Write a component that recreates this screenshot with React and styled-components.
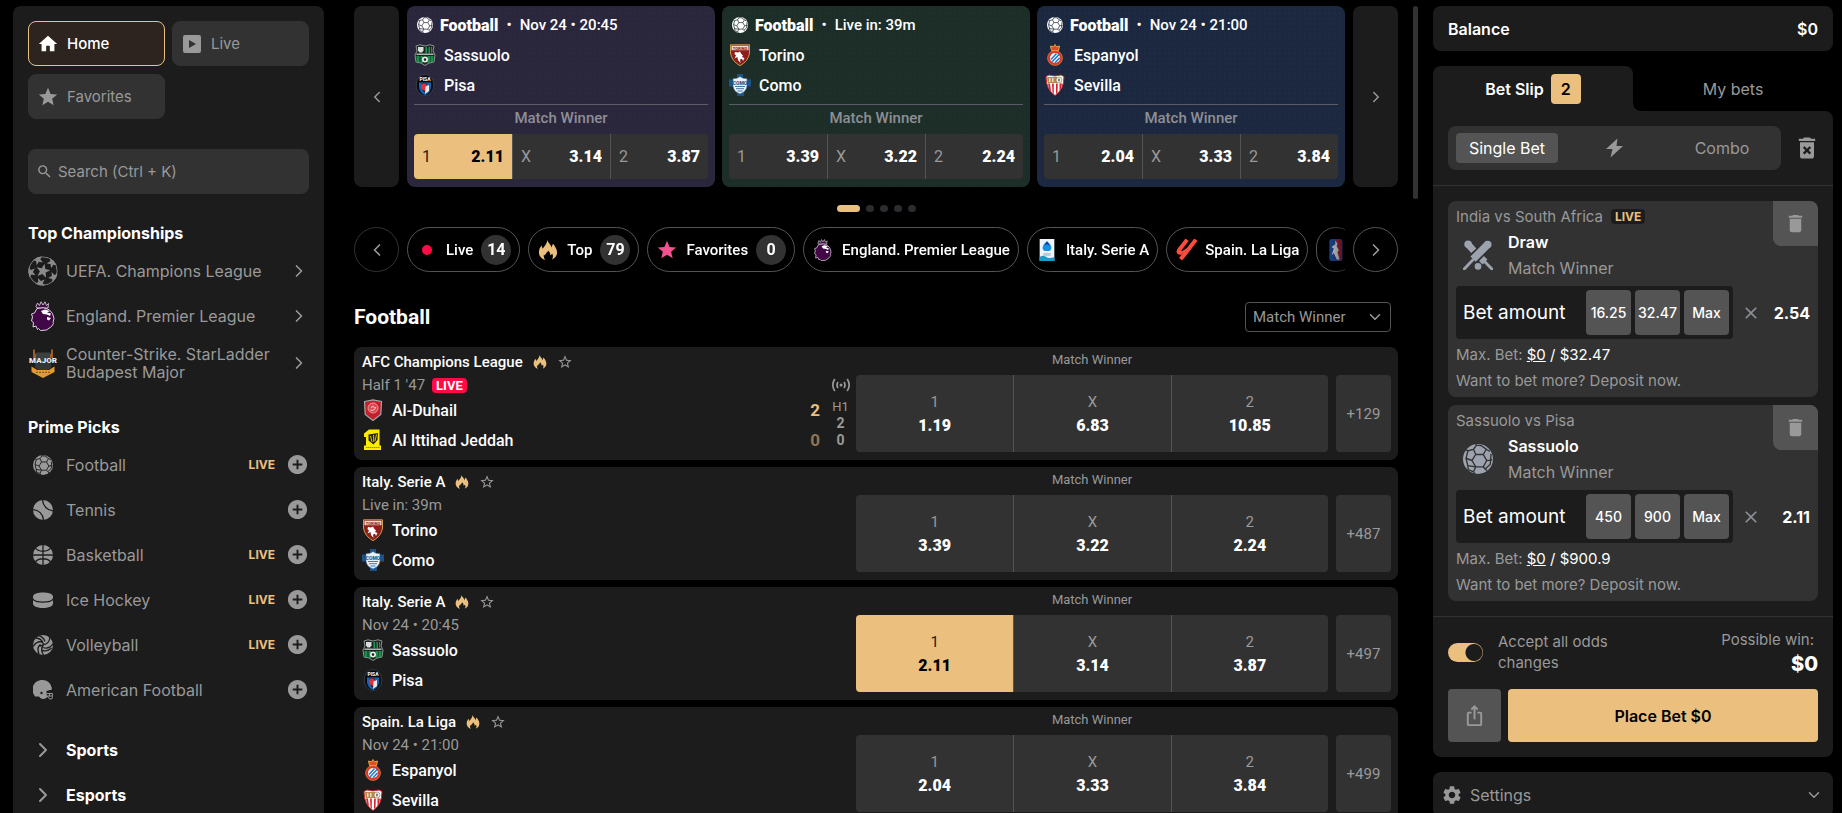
import React, { useState } from "react";
import styled, { createGlobalStyle } from "styled-components";
import {
  MdAddCircle,
  MdClose,
  MdDelete,
  MdDeleteForever,
  MdHome,
  MdIosShare,
  MdSearch,
  MdSettings,
  MdStar,
  MdStarBorder,
} from "react-icons/md";
import { LuChevronDown, LuChevronLeft, LuChevronRight } from "react-icons/lu";

const championships = [
  { name: "UEFA. Champions League", logo: "ucl" },
  { name: "England. Premier League", logo: "epl" },
  { name: "Counter-Strike. StarLadder Budapest Major", logo: "major" },
];

const picks = [
  { name: "Football", icon: "football", live: true },
  { name: "Tennis", icon: "tennis" },
  { name: "Basketball", icon: "basketball", live: true },
  { name: "Ice Hockey", icon: "puck", live: true },
  { name: "Volleyball", icon: "volleyball", live: true },
  { name: "American Football", icon: "helmet" },
];

const featured = [
  { time: "Nov 24 • 20:45", teams: ["Sassuolo", "Pisa"], odds: ["2.11", "3.14", "3.87"], picked: 0, color: "#2a263c", dot: "#2e2940" },
  { time: "Live in: 39m", teams: ["Torino", "Como"], odds: ["3.39", "3.22", "2.24"], color: "#1d2e28", dot: "#1e312a" },
  { time: "Nov 24 • 21:00", teams: ["Espanyol", "Sevilla"], odds: ["2.04", "3.33", "3.84"], color: "#1b283f", dot: "#1f2d44" },
];

const matches = [
  {
    league: "AFC Champions League",
    time: "Half 1 '47",
    teams: ["Al-Duhail", "Al Ittihad Jeddah"],
    odds: ["1.19", "6.83", "10.85"],
    more: 129,
    score: [2, 0],
  },
  { league: "Italy. Serie A", time: "Live in: 39m", teams: ["Torino", "Como"], odds: ["3.39", "3.22", "2.24"], more: 487 },
  { league: "Italy. Serie A", time: "Nov 24 • 20:45", teams: ["Sassuolo", "Pisa"], odds: ["2.11", "3.14", "3.87"], more: 497, picked: 0 },
  { league: "Spain. La Liga", time: "Nov 24 • 21:00", teams: ["Espanyol", "Sevilla"], odds: ["2.04", "3.33", "3.84"], more: 499 },
];

const bets = [
  { match: "India vs South Africa", live: true, pick: "Draw", icon: "cricket", amounts: ["16.25", "32.47", "Max"], odd: "2.54", max: "$32.47" },
  { match: "Sassuolo vs Pisa", pick: "Sassuolo", icon: "football", amounts: ["450", "900", "Max"], odd: "2.11", max: "$900.9" },
];

const outcomes = ["1", "X", "2"];

// five-pointed star as a list of polygon points
function star(cx, cy, r, turn, inner = 0.42) {
  return Array.from({ length: 10 }, (_, i) => {
    const a = ((turn + i * 36) * Math.PI) / 180;
    const d = i % 2 ? r * inner : r;
    return `${(cx + d * Math.sin(a)).toFixed(2)},${(cy - d * Math.cos(a)).toFixed(2)}`;
  }).join(" ");
}

function SportIcon({ name, size = 20, line = "#1c1c1c", color = "currentColor" }) {
  const stroke = { fill: "none", stroke: line, strokeWidth: 1.3 };
  return (
    <svg width={size} height={size} viewBox="0 0 20 20" fill={color} aria-hidden="true">
      {name === "football" && (
        <>
          <circle cx="10" cy="10" r="10" />
          <g {...stroke} strokeWidth={0.9}>
            <path d="M8.500 7h5l2.300 4-2.300 4.200h-5L6 11z" />
            <path d="M8.500 7 7 3.500 3.300 4.500 2 9.500 6 11M7 3.500 9 .8 12 1 15.500 3.500 13.500 7M15.500 3.500 18 5M15.800 11 19.500 10.500M13.500 15.200 16 18M8.500 15.200 7 18.500 3.500 17 3.200 14M8.500 15.200 3.200 14.500 2 9.500M18.700 6.500 18.200 13.500 15 16.500M9 .8 8.500 0M3.300 4.500 2 4M7 18.500 8 20" />
          </g>
        </>
      )}
      {name === "tennis" && (
        <>
          <circle cx="10" cy="10" r="10" />
          <path d="M9.500-1C9.500 6 14.500 10.800 21 10.800M-1 9.500C5.500 9.500 10.500 14 10.500 21" {...stroke} />
        </>
      )}
      {name === "basketball" && (
        <>
          <circle cx="10" cy="10" r="10" />
          <path d="M10 0v20M0 10h20M2 2.500C5 7.500 15 7.500 18 2.500M2 17.500C5 12.500 15 12.500 18 17.500" {...stroke} />
        </>
      )}
      {name === "puck" && (
        <>
          <path d="M0 6.500C0 1 20 1 20 6.500v7C20 19.500 0 19.500 0 13.500z" />
          <path d="M-.5 8.500C2 13.200 18 13.200 20.500 8.500" {...stroke} />
        </>
      )}
      {name === "volleyball" && (
        <>
          <circle cx="10" cy="10" r="10" />
          <path
            d="M10.500 9.500C9.500 5.500 6.500 3 2.500 3M12 6.500C11 3.500 8.500 1.200 5.500.5M10.500 9.500C14 9.500 17 6.500 16.800 2M10.500 9.500 6.500 11.500M9 7C5 6 2 8.500.3 11.500M7.500 9.500C5 11 4.500 15 6 19M10.500 9.500C8 13 8.500 17 10.500 20M10 12.500c4 1.500 7.500 0 10-3.500M9.500 15.500c3.500.8 6.500 0 9-2.500"
            {...stroke}
          />
        </>
      )}
      {name === "helmet" && (
        <>
          <path d="M9.500 0C15 0 18.500 4 19 9.500l-5.500 1.500.5 6.500-3 1.500c-2.500.3-4-.8-5-2.500H2C0 14-.8 11-.5 8.500 0 3.500 4 0 9.500 0z" />
          <circle cx="8.500" cy="13" r="1.200" fill={line} />
          <path d="M14 13.500h5.500c.3 2.200 0 4-.8 5.500h-2L14 16h5.300M16.500 13.500v3" fill="none" stroke={color} strokeWidth="1" />
        </>
      )}
      {name === "cricket" && (
        <g fill="none" stroke={color}>
          <path d="M3 2.500 7.200 7.200M12.300 12.300l2.400 2.400" strokeWidth="4.600" />
          <path d="M3.400 2.900 3.400 2.900" strokeWidth="5" strokeLinecap="round" />
          <path d="m14.500 14.500 4.800 4.800" strokeWidth="1.900" strokeLinecap="round" />
          <path d="M18.500 1 5.800 13.800" stroke={line} strokeWidth="6.800" />
          <path d="m16.700 2.800-10 10" strokeWidth="5" />
          <path d="m16.500 3 0 0" strokeWidth="5" strokeLinecap="round" />
          <path d="m6.500 13.300-5.700 6" strokeWidth="1.900" strokeLinecap="round" />
          <circle cx="10" cy="17.600" r="2.200" fill={color} stroke="none" />
        </g>
      )}
    </svg>
  );
}

function Crest({ team, size = 22 }) {
  return (
    <svg width={size} height={size} viewBox="0 0 22 22" aria-hidden="true">
      {team === "Sassuolo" && (
        <>
          <path d="M2 2 6 .8 11 2l5-1.200L20 2l-1 5 2 4-1 7-5 1-4 2.500L7 19l-5-1-1-7 2-4z" fill="#1d2420" stroke="#8c9691" />
          <path d="M11.500 3h1.500v6h-1.500zM14.500 3H16v6h-1.500zM17 3h1v5.500h-1z" fill="#1c9a55" />
          <path d="M4 3h5.500v3.500L8 8.500H5.500L4 6.500z" fill="#d9dedb" />
          <path d="M2.500 9.500h17V11h-17z" fill="#aab5ae" />
          <path d="M2.500 12h3v6h-3zM16.500 12h3v6h-3zM6.500 12H9v7H6.500zM13.500 12H16v7h-2.500z" fill="#17904c" />
          <circle cx="11" cy="15.500" r="3" fill="#e8ece9" />
          <path d="m11 14 1.400 1-.5 1.700h-1.800l-.5-1.700z" fill="#1b211e" />
        </>
      )}
      {team === "Pisa" && (
        <>
          <ellipse cx="11" cy="11" rx="8.800" ry="10.500" fill="#090b10" stroke="#3c4652" strokeWidth=".8" />
          <path d="M5 8.500h12V13q0 5-6 8-6-3-6-8z" fill="#1564b4" />
          <path d="M7.500 9.500h5v10L9 17z" fill="#0b0f17" />
          <path d="M7 12q0-3 4-2.500l2 2-2 5.500q-4-1-4-5z" fill="#e32f3b" />
          <path d="M11.500 12.500 15 11v6l-4 3z" fill="#e6e8ea" />
          <text x="11" y="7" fontSize="5" fontWeight="700" fill="#fff" textAnchor="middle" fontFamily="Roboto, sans-serif">PISA</text>
        </>
      )}
      {team === "Torino" && (
        <>
          <path d="M1.500.8h19V9q-1 8-9.500 12.700Q2.500 17 1.500 9z" fill="#8a1f1c" stroke="#d39a45" />
          <path d="M2.500 1.800h17v4.400h-17z" fill="#f0dfd2" />
          <text x="11" y="5.500" fontSize="4" fontWeight="900" fill="#a22520" textAnchor="middle" fontFamily="Roboto, sans-serif">TORINO</text>
          <path d="m6 8 3 .5 2-1 1 2 2 2-1 1.500 2.500 1L14 17l-1-2.200-2 .7.500 3.500L9 16l-.5-3-3 1.500L7 11.500 5.500 10z" fill="#fff" />
        </>
      )}
      {team === "Como" && (
        <>
          <path d="M8 0h6v5.500h8v7h-7V22H8v-9.500H0v-7h8z" fill="#1d5286" />
          <path d="M4 4.500Q8 5 11 2.500 14 5 18 4.500V12q0 5-7 8-7-3-7-8z" fill="#e9f1f7" stroke="#2b5d8e" strokeWidth=".6" />
          <text x="11" y="10.500" fontSize="5" fontWeight="900" fill="#225b91" textAnchor="middle" fontFamily="Roboto, sans-serif">COMO</text>
          <path d="M6 12.500h10M7 14.700h8M8.500 17h5" stroke="#3f78ab" />
        </>
      )}
      {team === "Espanyol" && (
        <>
          <path d="m6.500 2 3 .8L11 .5l1.500 2.300 3-.8-1 4.500h-7z" fill="#e4482d" stroke="#eeb42c" strokeWidth=".9" />
          <circle cx="11" cy="14" r="7.500" fill="#e2352c" stroke="#f3a72e" strokeWidth=".5" />
          <circle cx="11" cy="14" r="5" fill="#fff" />
          <path d="m7 15.500 5.500-6M8 18l7.300-7.800M11 18.800l4.700-5" stroke="#2a78c2" strokeWidth="1.600" />
        </>
      )}
      {team === "Sevilla" && (
        <>
          <path d="M2 2.500 5 1l6 1 6-1 3 1.500q0 13-9 19-9-6-9-19z" fill="#fff" stroke="#cc2a2d" />
          <path d="M4 9.500h2l1 8-2-3zM8 9.500h1.800V20L8.500 18.500zM12 9.500h1.800l-.3 9-1.500 1.500zM15.500 9.500H18l-1 5-1.500 2z" fill="#d7212c" />
          <path d="M3 3h10v6H3.500z" fill="#b98949" />
          <path d="M5 4h1.500v4H5zM8 4h1.500v4H8z" fill="#e9dcc0" />
          <circle cx="15" cy="6" r="3" fill="#f4f0e6" stroke="#6f5a35" strokeWidth=".5" />
          <path d="M15 4.500v3M14 6h2" stroke="#333" strokeWidth=".7" />
        </>
      )}
      {team === "Al-Duhail" && (
        <>
          <path d="M2.500 2.500 11 .8l8.500 1.700-.7 13L11 21.500l-7.800-6z" fill="#c2202a" stroke="#a3a6aa" strokeWidth="1.200" />
          <circle cx="11" cy="9" r="5" fill="#e04850" stroke="#f2bcbc" strokeWidth=".7" />
          <path d="M8.500 11q4 1.500 5-3M9 8.500q2-2 3.500 0" fill="none" stroke="#fff" strokeWidth=".8" />
        </>
      )}
      {team === "Al Ittihad Jeddah" && (
        <>
          <path d="M7 .5h10.500v16h1.500V21H2v-4.500h2V8H2V4.500z" fill="#fdec00" />
          <path d="M6.500 5.500 16 4l-.5 7-4 4.500-5-4z" fill="#2a2609" />
          <path d="m8.500 7 1.500 6M11.500 6l.3 7M14.500 5.500 13 12" stroke="#fdec00" strokeWidth=".8" />
          <path d="M4 18.500h13.500" stroke="#7b7400" strokeWidth=".8" strokeDasharray="1.500 .5" />
        </>
      )}
    </svg>
  );
}

function LeagueLogo({ name, size = 30 }) {
  return (
    <svg width={size} height={size} viewBox="0 0 30 30" aria-hidden="true">
      {name === "ucl" && (
        <>
          <clipPath id="starball">
            <circle cx="15" cy="15" r="14.800" />
          </clipPath>
          <g fill="#8a8a8a" clipPath="url(#starball)">
            <polygon points={star(15, 15, 7.4, 12)} />
            {[48, 120, 192, 264, 336].map((a) => {
              const rad = (a * Math.PI) / 180;
              return <polygon key={a} points={star(15 + 12.6 * Math.sin(rad), 15 - 12.6 * Math.cos(rad), 5.8, a)} />;
            })}
            <circle cx="15" cy="15" r="14.200" fill="none" stroke="#8a8a8a" strokeWidth=".9" />
          </g>
        </>
      )}
      {name === "epl" && (
        <>
          <path d="M8 5.500 9.500 2l2 2.500L13 .8 15 4l2-3.200 1.500 3.700 2-2L20 7H9z" fill="#3c1040" stroke="#e6dce6" strokeWidth=".8" />
          <path
            d="M9 7.500q7-2 12 1l3.500 4 1.500 5-1 4 .5 1-2 3-5 3.500-6 .5-2-2-1 1-1.500-3.500L5 26l.5-4.500L3.500 20l1-4-1-3 3-1z"
            fill="#420747"
            stroke="#efe8ef"
            strokeWidth=".9"
          />
          <path d="m13 10 4-1.500 5 1.500-3 1.500 4 1-1 2.500-3-1.500-4-.5zM19 16l4 1-2 2.500-2-1z" fill="#fff" />
        </>
      )}
      {name === "major" && (
        <>
          <path d="M5 1.500h2v4l3 1.500h10l3-1.500v-4h2V10H5z" fill="#9e5c1e" />
          <path d="M8 4.500h14V14H8z" fill="#3b4040" />
          <path d="M7 15h16v5l-8 5-8-5z" fill="#323838" />
          <path d="M3.500 18.500 9 22h12l5.500-3.500V24L15 30 3.500 24z" fill="#e49a2e" />
          <path d="M8 24.300h14" stroke="#7b4d12" strokeDasharray="2 1" />
          <text x="15" y="15" fontSize="8" fontWeight="900" fill="#ececec" textAnchor="middle" fontFamily="Roboto, sans-serif">MAJOR</text>
        </>
      )}
      {name === "seriea" && (
        <>
          <path d="M5 0h20v30H5z" fill="#eef4f9" />
          <path d="M15 3q6 5 6 9t-4 4.500h-4Q9 16 9 12t6-9z" fill="#1390e5" />
          <path d="m15 3 4 6-4-2-4 2z" fill="#0d3d96" />
          <path d="M10 19h10v4H10z" fill="#b9c9d6" />
          <path d="M5 24.500q5-3 9 0t11 0V30H5z" fill="#1b9ec0" />
        </>
      )}
      {name === "laliga" && (
        <g fill="none" stroke="#ff4b3e" strokeWidth="5.500">
          <path d="M16.500 1 6 14.500Q2.500 20 10 18.500" />
          <path d="M28.500 1 16 17q-3.500 5-8.500 10.500" />
          <path d="M10 18.500q3.500-1 6.500-4" strokeWidth="4" />
        </g>
      )}
      {name === "nba" && (
        <>
          <rect x="6" y="0" width="18" height="30" rx="3" fill="#1c4b94" />
          <path d="M14 1h7q2 0 2 2v24q0 2-2 2h-3l-2-9 2-6z" fill="#a52439" />
          <path d="m14 2 3 4-1 4 3 5-2 3 3 10h-4l-4-9-3 3 3-9-3-2 5-4z" fill="#d8dae2" />
        </>
      )}
    </svg>
  );
}

function Flame({ size = 16 }) {
  return (
    <svg width={size} height={size} viewBox="0 0 20 22" fill="#ebc07f" aria-hidden="true">
      <path d="M9.500 0c.3 3.200 4 5 4.200 8.200L15.500 4c2 2.500 4.500 5.700 4.500 9.500 0 4-2.300 6.500-5.500 8 1-2 1.300-4.200.2-6.300L12.500 17c.2-2.300-.7-4-2.500-5.500.2 2-3 3.200-3.300 5.500L5.500 16c-.6 2 .1 4 1.200 6C2.500 20.500 0 17.500 0 13.500 0 10.500 1.300 8 3 6l1 3.500C6.500 7 8.700 4 9.500 0z" />
    </svg>
  );
}

function Sidebar() {
  return (
    <Side>
      <NavGrid>
        <NavButton $active>
          <MdHome size={22} />
          Home
        </NavButton>
        <NavButton>
          <svg width="22" height="22" viewBox="0 0 22 22" aria-hidden="true">
            <rect x="2" y="2" width="18" height="18" rx="2" fill="#999" />
            <path d="M8 7l7 4-7 4z" fill="#323232" />
          </svg>
          Live
        </NavButton>
        <NavButton>
          <MdStar size={22} />
          Favorites
        </NavButton>
      </NavGrid>
      <Search>
        <MdSearch size={17} />
        <input type="search" placeholder="Search (Ctrl + K)" aria-label="Search" />
      </Search>
      <SideTitle>Top Championships</SideTitle>
      {championships.map((item) => (
        <SideRow href="#" key={item.name}>
          <IconBox>
            <LeagueLogo name={item.logo} />
          </IconBox>
          <span>{item.name}</span>
          <RowEnd>
            <LuChevronRight size={20} />
          </RowEnd>
        </SideRow>
      ))}
      <SideTitle>Prime Picks</SideTitle>
      {picks.map((item) => (
        <PickRow key={item.name}>
          <SideRow href="#">
            <IconBox>
              <SportIcon name={item.icon} />
            </IconBox>
            <span>{item.name}</span>
            {item.live && <LiveText>LIVE</LiveText>}
          </SideRow>
          <PlusButton aria-label={`Add ${item.name}`}>
            <MdAddCircle size={23} />
          </PlusButton>
        </PickRow>
      ))}
      <Groups>
        {["Sports", "Esports"].map((name) => (
          <GroupButton key={name}>
            <IconBox>
              <LuChevronRight size={24} />
            </IconBox>
            {name}
          </GroupButton>
        ))}
      </Groups>
    </Side>
  );
}

function FeaturedCard({ card }) {
  return (
    <Featured $color={card.color} $dot={card.dot}>
      <FeaturedHead>
        <SportIcon name="football" size={16} line={card.color} />
        <b>Football</b>
        <i>•</i>
        <span>{card.time}</span>
      </FeaturedHead>
      {card.teams.map((team) => (
        <Team key={team}>
          <Crest team={team} />
          {team}
        </Team>
      ))}
      <FeaturedMarket>Match Winner</FeaturedMarket>
      <Odds>
        {card.odds.map((odd, i) => (
          <FeaturedOdd key={i} $picked={card.picked === i}>
            <span>{outcomes[i]}</span>
            <b>{odd}</b>
          </FeaturedOdd>
        ))}
      </Odds>
    </Featured>
  );
}

function MatchRow({ match }) {
  return (
    <Match>
      <Info>
        <League>
          {match.league}
          <Flame size={14} />
          <StarButton aria-label="Add to favorites">
            <MdStarBorder size={16} />
          </StarButton>
        </League>
        <Time>
          {match.time}
          {match.score && <LiveTag>LIVE</LiveTag>}
        </Time>
        {match.teams.map((team, i) => (
          <Team key={team}>
            <Crest team={team} />
            {team}
            {match.score && <Score $dim={i === 1}>{match.score[i]}</Score>}
          </Team>
        ))}
      </Info>
      {match.score && (
        <Period>
          <svg width="20" height="14" viewBox="0 0 20 14" fill="none" stroke="currentColor" strokeWidth="1.700" aria-hidden="true">
            <circle cx="10" cy="7" r="1.500" fill="currentColor" stroke="none" />
            <path d="M7 4q-2 3 0 6M13 4q2 3 0 6M3.800 1q-4 6 0 12M16.200 1q4 6 0 12" />
          </svg>
          <span>H1</span>
          <b>{match.score[0]}</b>
          <b>{match.score[1]}</b>
        </Period>
      )}
      <Market>
        <MarketName>Match Winner</MarketName>
        <Odds>
          {match.odds.map((odd, i) => (
            <MatchOdd key={i} $picked={match.picked === i}>
              <span>{outcomes[i]}</span>
              <b>{odd}</b>
            </MatchOdd>
          ))}
        </Odds>
      </Market>
      <MoreButton>+{match.more}</MoreButton>
    </Match>
  );
}

function Chips() {
  return (
    <Bar>
      <RoundButton aria-label="Previous leagues" $dim>
        <LuChevronLeft size={20} />
      </RoundButton>
      <ChipTrack>
        <Chip>
          <ChipIcon><LiveDot /></ChipIcon>
          Live<Count>14</Count>
        </Chip>
        <Chip>
          <ChipIcon><Flame size={20} /></ChipIcon>
          Top<Count>79</Count>
        </Chip>
        <Chip>
          <ChipIcon><MdStar size={22} color="#f5508f" /></ChipIcon>
          Favorites<Count>0</Count>
        </Chip>
        <Chip>
          <ChipIcon><LeagueLogo name="epl" size={22} /></ChipIcon>
          England. Premier League
        </Chip>
        <Chip>
          <ChipIcon><LeagueLogo name="seriea" size={22} /></ChipIcon>
          Italy. Serie A
        </Chip>
        <Chip>
          <ChipIcon><LeagueLogo name="laliga" size={22} /></ChipIcon>
          Spain. La Liga
        </Chip>
        <Chip aria-label="USA. NBA">
          <ChipIcon><LeagueLogo name="nba" size={22} /></ChipIcon>
        </Chip>
      </ChipTrack>
      <RoundButton aria-label="Next leagues">
        <LuChevronRight size={20} />
      </RoundButton>
    </Bar>
  );
}

function BetCard({ bet }) {
  return (
    <Bet>
      <BetTop>
        <BetMatch>
          {bet.match}
          {bet.live && <DarkTag>LIVE</DarkTag>}
        </BetMatch>
        <RemoveButton aria-label="Remove bet">
          <MdDelete size={23} />
        </RemoveButton>
        <BetPick>
          <SportIcon name={bet.icon} size={30} line="#323232" color="#9ca3af" />
          <div>
            <b>{bet.pick}</b>
            <span>Match Winner</span>
          </div>
        </BetPick>
      </BetTop>
      <Stake>
        <AmountBox>
          <input type="text" placeholder="Bet amount" aria-label="Bet amount" />
          {bet.amounts.map((amount) => (
            <AmountButton key={amount}>{amount}</AmountButton>
          ))}
        </AmountBox>
        <MdClose size={20} color="#8b8f98" />
        <b>{bet.odd}</b>
      </Stake>
      <BetNote>
        Max. Bet: <button>$0</button> <em>/ {bet.max}</em>
      </BetNote>
      <BetNote>Want to bet more? Deposit now.</BetNote>
    </Bet>
  );
}

function BetSlip() {
  const [accept, setAccept] = useState(true);
  return (
    <SlipColumn>
      <Balance>
        <span>Balance</span>
        <span>$0</span>
      </Balance>
      <div>
        <Tabs>
          <Tab $active>
            Bet Slip <Badge>2</Badge>
          </Tab>
          <TabBack>
            <Tab>My bets</Tab>
          </TabBack>
        </Tabs>
        <Slip>
          <Modes>
            <ModeBar>
              <ModeButton $active>Single Bet</ModeButton>
              <ModeButton aria-label="Quick bet">
                <svg width="18" height="20" viewBox="0 0 18 20" fill="#999" aria-hidden="true">
                  <path d="M11.500.5 0 11h6.500L4.500 19.500 17 8h-6.500z" />
                </svg>
              </ModeButton>
              <ModeButton>Combo</ModeButton>
            </ModeBar>
            <ClearButton aria-label="Clear bet slip">
              <MdDeleteForever size={28} />
            </ClearButton>
          </Modes>
          <BetList>
            {bets.map((bet) => (
              <BetCard key={bet.match} bet={bet} />
            ))}
          </BetList>
          <Summary>
            <Accept>
              <input type="checkbox" checked={accept} onChange={() => setAccept(!accept)} />
              <span>Accept all odds changes</span>
            </Accept>
            <Win>
              <span>Possible win:</span>
              <b>$0</b>
            </Win>
          </Summary>
          <Actions>
            <ShareButton aria-label="Share">
              <MdIosShare size={23} />
            </ShareButton>
            <PlaceButton>Place Bet $0</PlaceButton>
          </Actions>
        </Slip>
      </div>
      <Settings>
        <MdSettings size={22} />
        <span>Settings</span>
        <LuChevronDown size={18} />
      </Settings>
    </SlipColumn>
  );
}

function App() {
  return (
    <Page>
      <GlobalStyle />
      <Sidebar />
      <Main>
        <Bar $tall>
          <SlideButton aria-label="Previous matches">
            <LuChevronLeft size={18} />
          </SlideButton>
          <Slides>
            {featured.map((card) => (
              <FeaturedCard key={card.color} card={card} />
            ))}
          </Slides>
          <SlideButton aria-label="Next matches">
            <LuChevronRight size={18} />
          </SlideButton>
        </Bar>
        <Dots>
          {[0, 1, 2, 3, 4].map((n) => (
            <Dot key={n} $active={n === 0} />
          ))}
        </Dots>
        <Chips />
        <ListHead>
          <h1>Football</h1>
          <SelectBox>
            <select aria-label="Market">
              <option>Match Winner</option>
            </select>
            <LuChevronDown size={18} />
          </SelectBox>
        </ListHead>
        <MatchList>
          {matches.map((match, i) => (
            <MatchRow key={i} match={match} />
          ))}
        </MatchList>
      </Main>
      <Thumb />
      <BetSlip />
    </Page>
  );
}

export default App;

/* Css */
const GlobalStyle = createGlobalStyle`
  * {
    box-sizing: border-box;
  }

  body {
    margin: 0;
    background: #000;
    color: #999;
    font: 400 16px Roboto, "Liberation Sans", sans-serif;
  }

  button {
    font: inherit;
    color: inherit;
    background: none;
    border: 0;
    padding: 0;
    cursor: pointer;
  }

  a {
    color: inherit;
    text-decoration: none;
  }

  input, select {
    font: inherit;
    color: inherit;
  }

  svg {
    flex: none;
  }
`;

const Page = styled.div`
  display: grid;
  grid-template-columns: 311px minmax(0, 1fr) 5px 415px;
  height: 100vh;
  padding: 6px 9px 0 13px;
  overflow: hidden;
`;

const Side = styled.aside`
  padding: 15px;
  background: #1c1c1c;
  border-radius: 8px 8px 0 0;
  overflow: hidden;
  font-family: Inter, "Liberation Sans", sans-serif;
`;

const NavGrid = styled.nav`
  display: grid;
  grid-template-columns: 1fr 1fr;
  gap: 8px 7px;
`;

const NavButton = styled.button`
  display: flex;
  align-items: center;
  gap: 8px;
  height: 45px;
  padding: 0 8px;
  border: 1px solid ${(props) => (props.$active ? "#ebc07f" : "#323232")};
  border-radius: 8px;
  background: ${(props) => (props.$active ? "#2d241f" : "#323232")};
  color: ${(props) => (props.$active ? "#fff" : "#999")};
  font-size: 15px;
  font-weight: ${(props) => (props.$active ? 500 : 400)};
`;

const Search = styled.label`
  display: flex;
  align-items: center;
  gap: 5px;
  height: 45px;
  margin-top: 30px;
  padding: 0 8px;
  border-radius: 8px;
  background: #323232;

  input {
    flex: 1;
    min-width: 0;
    padding: 0;
    border: 0;
    outline: 0;
    background: none;
    font-size: 15px;
  }

  input::placeholder {
    color: #999;
  }
`;

const SideTitle = styled.h2`
  margin: 29px 0 5px;
  color: #fff;
  font-size: 16px;
  line-height: 20px;
  font-weight: 700;
`;

const SideRow = styled.a`
  display: flex;
  flex: 1;
  align-items: center;
  gap: 8px;
  min-height: 45px;
  padding: 7px 0;
  font-size: 16px;
  line-height: 18px;
`;

const IconBox = styled.span`
  display: flex;
  flex: none;
  align-items: center;
  justify-content: center;
  width: 30px;
  color: #999;
`;

const RowEnd = styled.span`
  display: flex;
  margin-left: auto;
`;

const PickRow = styled.div`
  display: flex;
  align-items: center;
  gap: 11px;
`;

const LiveText = styled.b`
  margin-left: auto;
  color: #ebc07f;
  font-size: 12px;
`;

const PlusButton = styled.button`
  display: flex;
`;

const Groups = styled.div`
  margin-top: 15px;
`;

const GroupButton = styled.button`
  display: flex;
  align-items: center;
  gap: 8px;
  width: 100%;
  height: 45px;
  color: #fff;
  font-weight: 700;
`;

const Main = styled.main`
  padding: 0 15px 0 30px;
  overflow: hidden;
`;

const Bar = styled.div`
  display: flex;
  gap: 8px;
  height: ${(props) => (props.$tall ? "auto" : "45px")};
`;

const SlideButton = styled.button`
  display: flex;
  flex: none;
  align-items: center;
  justify-content: center;
  width: 45px;
  border-radius: 8px;
  background: #1c1c1c;
`;

const Slides = styled.div`
  display: grid;
  flex: 1;
  grid-template-columns: repeat(3, minmax(0, 1fr));
  gap: 7px;
`;

const Featured = styled.article`
  padding: 4px 7px 8px;
  border-radius: 8px;
  background: radial-gradient(${(props) => props.$dot} 1px, transparent 1px) 0 0 / 5px 5px ${(props) => props.$color};
  color: #fff;
`;

const FeaturedHead = styled.div`
  display: flex;
  align-items: center;
  height: 30px;
  padding-left: 3px;
  font-size: 15px;
  font-weight: 500;

  b {
    margin-left: 7px;
    font-size: 16px;
    font-weight: 900;
  }

  i {
    margin: 0 8px;
    font-style: normal;
  }
`;

const Team = styled.div`
  display: flex;
  align-items: center;
  gap: 8px;
  height: 30px;
  color: #fff;
  font-size: 16px;
  font-weight: 500;
`;

const FeaturedMarket = styled.div`
  height: 30px;
  margin-top: 4px;
  border-top: 1px solid #5c5c69;
  color: #8e8e96;
  font-size: 15px;
  line-height: 27px;
  font-weight: 500;
  text-align: center;
`;

const Odds = styled.div`
  display: grid;
  grid-template-columns: repeat(3, minmax(0, 1fr));
  border-radius: 4px;
  overflow: hidden;
`;

const OddButton = styled.button`
  display: flex;
  background: ${(props) => (props.$picked ? "#ebc07f" : "#323232")};

  & + & {
    border-left: 1px solid #545454;
  }

  span {
    color: ${(props) => (props.$picked ? "#1c1c1c" : "#999")};
  }

  b {
    color: ${(props) => (props.$picked ? "#000" : "#fff")};
    font-weight: 900;
  }
`;

const FeaturedOdd = styled(OddButton)`
  align-items: center;
  justify-content: space-between;
  height: 45px;
  padding: 0 8px;
`;

const MatchOdd = styled(OddButton)`
  flex-direction: column;
  align-items: center;
  justify-content: center;
  height: 77px;
  line-height: 23px;

  span {
    font-size: 15px;
  }
`;

const Dots = styled.div`
  display: flex;
  justify-content: center;
  gap: 6px;
  padding: 18px 0 15px;
`;

const Dot = styled.span`
  width: ${(props) => (props.$active ? "23px" : "8px")};
  height: 7px;
  border-radius: 4px;
  background: ${(props) => (props.$active ? "#ebc07f" : "#2c2c30")};
`;

const RoundButton = styled.button`
  display: flex;
  flex: none;
  align-items: center;
  justify-content: center;
  width: 45px;
  height: 45px;
  border: 1px solid ${(props) => (props.$dim ? "#323232" : "#545454")};
  border-radius: 50%;
`;

const ChipTrack = styled.div`
  display: flex;
  flex: 1;
  gap: 8px;
  min-width: 0;
  overflow: hidden;
  mask-image: linear-gradient(to right, #000 calc(100% - 20px), rgba(0, 0, 0, 0.5));
`;

const Chip = styled.button`
  display: flex;
  flex: none;
  align-items: center;
  gap: 8px;
  padding: 0 8px;
  border: 1px solid #545454;
  border-radius: 23px;
  color: #fff;
  font-size: 15px;
  font-weight: 500;
`;

const ChipIcon = styled.span`
  display: flex;
  align-items: center;
  justify-content: center;
  width: 22px;
`;

const LiveDot = styled.span`
  width: 10px;
  height: 10px;
  border-radius: 50%;
  background: #ff0a45;
`;

const Count = styled.b`
  width: 30px;
  border-radius: 50%;
  background: #323232;
  font-size: 16px;
  line-height: 30px;
  text-align: center;
`;

const ListHead = styled.div`
  display: flex;
  align-items: center;
  justify-content: space-between;
  padding: 30px 7px 15px 0;

  h1 {
    margin: 0;
    color: #fff;
    font-size: 21px;
    line-height: 30px;
  }
`;

const SelectBox = styled.div`
  display: grid;
  align-items: center;
  width: 146px;
  height: 30px;

  select, svg {
    grid-area: 1 / 1;
  }

  select {
    height: 30px;
    padding: 0 7px;
    appearance: none;
    border: 1px solid #545454;
    border-radius: 4px;
    background: none;
    font-size: 15px;
  }

  svg {
    margin-right: 7px;
    justify-self: end;
    pointer-events: none;
  }
`;

const MatchList = styled.div`
  display: grid;
  gap: 7px;
`;

const Match = styled.article`
  display: flex;
  padding: 0 7px 0 8px;
  border-radius: 8px;
  background: #1c1c1c;
`;

const Info = styled.div`
  flex: 1;
  min-width: 0;
  padding: 4px 0 5px;
`;

const League = styled.div`
  display: flex;
  align-items: center;
  gap: 10px;
  height: 22px;
  margin-bottom: 2px;
  color: #fff;
  font-size: 15px;
  font-weight: 500;
`;

const StarButton = styled.button`
  display: flex;
  color: #999;
`;

const Time = styled.div`
  display: flex;
  align-items: center;
  gap: 7px;
  height: 20px;
  font-size: 15px;
`;

const LiveTag = styled.b`
  padding: 0 4px;
  border-radius: 4px;
  background: #ff0a45;
  color: #fff;
  font-size: 13px;
  line-height: 15px;
`;

const Score = styled.b`
  margin-left: auto;
  color: ${(props) => (props.$dim ? "#8e7652" : "#ebc07f")};
  font-size: 17px;
`;

const Period = styled.div`
  display: flex;
  flex-direction: column;
  align-items: center;
  width: 29px;
  padding: 31px 0 0 12px;
  font-size: 14px;
  line-height: 17px;

  svg {
    margin-bottom: 6px;
  }

  span {
    font-size: 13px;
  }
`;

const Market = styled.div`
  flex: 0 0 46%;
  max-width: 472px;
  margin: 0 8px 8px 7px;
`;

const MarketName = styled.div`
  height: 28px;
  font-size: 13px;
  line-height: 26px;
  text-align: center;
`;

const MoreButton = styled.button`
  width: 55px;
  margin: 28px 0 8px;
  border-radius: 4px;
  background: #323232;
  font-size: 15px;
`;

const Thumb = styled.div`
  height: 193px;
  border-radius: 3px;
  background: #323232;
`;

const SlipColumn = styled.section`
  display: flex;
  flex-direction: column;
  gap: 15px;
  padding-left: 15px;
  font-family: Inter, "Liberation Sans", sans-serif;
`;

const Balance = styled.div`
  display: flex;
  flex: none;
  align-items: center;
  justify-content: space-between;
  height: 45px;
  padding: 0 15px;
  border-radius: 8px;
  background: #1c1c1c;
  color: #fff;
  font-weight: 600;
`;

const Tabs = styled.div`
  display: grid;
  grid-template-columns: 1fr 1fr;
`;

const Tab = styled.button`
  display: flex;
  align-items: center;
  justify-content: center;
  gap: 7px;
  width: 100%;
  height: 45px;
  border-radius: ${(props) => (props.$active ? "8px 8px 0 0" : "0 0 0 8px")};
  background: ${(props) => (props.$active ? "#1c1c1c" : "#000")};
  color: ${(props) => (props.$active ? "#fff" : "#999")};
  font-weight: ${(props) => (props.$active ? 600 : 400)};
`;

const TabBack = styled.div`
  background: linear-gradient(to right, #1c1c1c 50%, #000 50%);
`;

const Badge = styled.span`
  width: 30px;
  border-radius: 4px;
  background: #ebc07f;
  color: #000;
  line-height: 30px;
`;

const Slip = styled.div`
  border-radius: 0 8px 8px 8px;
  background: #1c1c1c;
`;

const Modes = styled.div`
  display: flex;
  align-items: center;
  gap: 12px;
  padding: 15px 12px 15px 15px;
  border-bottom: 1px solid #323232;
`;

const ModeBar = styled.div`
  display: flex;
  flex: 1;
  align-items: center;
  justify-content: space-between;
  height: 44px;
  padding: 0 8px;
  border-radius: 8px;
  background: #323232;
`;

const ModeButton = styled.button`
  display: flex;
  align-items: center;
  justify-content: center;
  width: 102px;
  height: 30px;
  border-radius: 4px;
  background: ${(props) => (props.$active ? "#545454" : "none")};
  color: ${(props) => (props.$active ? "#fff" : "#999")};
`;

const ClearButton = styled.button`
  display: flex;
`;

const BetList = styled.div`
  display: grid;
  gap: 8px;
  padding: 15px;
  border-bottom: 1px solid #323232;
`;

const Bet = styled.article`
  padding: 0 8px 3px;
  border-radius: 8px;
  background: #323232;
  overflow: hidden;
`;

const BetTop = styled.div`
  display: grid;
  grid-template-columns: 1fr 45px;
  grid-template-rows: 30px 55px;
  margin-right: -8px;
`;

const BetMatch = styled.div`
  display: flex;
  align-items: center;
  gap: 8px;
  font-size: 15px;
`;

const DarkTag = styled.b`
  padding: 0 4px;
  border-radius: 4px;
  background: #1c1c1c;
  color: #ebc07f;
  font-size: 12px;
  line-height: 15px;
`;

const RemoveButton = styled.button`
  display: flex;
  grid-row: 1 / 3;
  grid-column: 2;
  align-items: center;
  justify-content: center;
  height: 45px;
  border-radius: 0 0 0 8px;
  background: #545454;
`;

const BetPick = styled.div`
  display: flex;
  align-items: center;
  gap: 15px;
  padding: 0 0 7px 7px;
  line-height: 26px;

  b, span {
    display: block;
  }

  b {
    color: #fff;
    font-weight: 600;
  }
`;

const Stake = styled.div`
  display: flex;
  align-items: center;
  gap: 8px;
  margin-bottom: 3px;

  b {
    margin-left: auto;
    color: #fff;
  }
`;

const AmountBox = styled.div`
  display: flex;
  gap: 4px;
  width: 277px;
  padding: 4px 4px 4px 7px;
  border-radius: 4px;
  background: #1c1c1c;

  input {
    flex: 1;
    min-width: 0;
    padding: 0;
    border: 0;
    outline: 0;
    background: none;
    font-size: 19px;
  }

  input::placeholder {
    color: #fff;
  }
`;

const AmountButton = styled.button`
  width: 45px;
  height: 45px;
  border-radius: 4px;
  background: #545454;
  color: #fff;
  font-size: 14px;
  font-weight: 500;
`;

const BetNote = styled.div`
  font-size: 15px;
  line-height: 26px;

  button {
    color: #fff;
    text-decoration: underline;
  }

  em {
    color: #fff;
    font-style: normal;
  }
`;

const Summary = styled.div`
  display: flex;
  justify-content: space-between;
  padding: 11px 15px 13px;
`;

const Accept = styled.label`
  display: flex;
  align-items: center;
  gap: 15px;
  font-size: 15px;
  line-height: 21px;

  span {
    width: 130px;
  }

  input {
    width: 35px;
    height: 19px;
    margin: 0;
    appearance: none;
    border-radius: 10px;
    background: radial-gradient(circle at 9px 50%, #1c1c1c 8px, transparent 9px) #545454;
  }

  input:checked {
    background: radial-gradient(circle at 26px 50%, #1c1c1c 8px, transparent 9px) #ebc07f;
  }
`;

const Win = styled.div`
  display: flex;
  flex-direction: column;
  align-items: flex-end;
  font-size: 15px;
  line-height: 24px;

  span {
    padding-right: 4px;
  }

  b {
    color: #fff;
    font-size: 20px;
    font-weight: 800;
  }
`;

const Actions = styled.div`
  display: flex;
  gap: 7px;
  padding: 0 15px 15px;
`;

const ShareButton = styled.button`
  display: flex;
  align-items: center;
  justify-content: center;
  width: 53px;
  height: 53px;
  border-radius: 4px;
  background: #545454;
`;

const PlaceButton = styled.button`
  flex: 1;
  border-radius: 4px;
  background: #ebc07f;
  color: #000;
  font-weight: 600;
`;

const Settings = styled.button`
  display: flex;
  flex: none;
  align-items: center;
  gap: 7px;
  height: 45px;
  padding: 0 10px 0 8px;
  border-radius: 8px;
  background: #1c1c1c;
  text-align: left;

  span {
    flex: 1;
  }
`;
